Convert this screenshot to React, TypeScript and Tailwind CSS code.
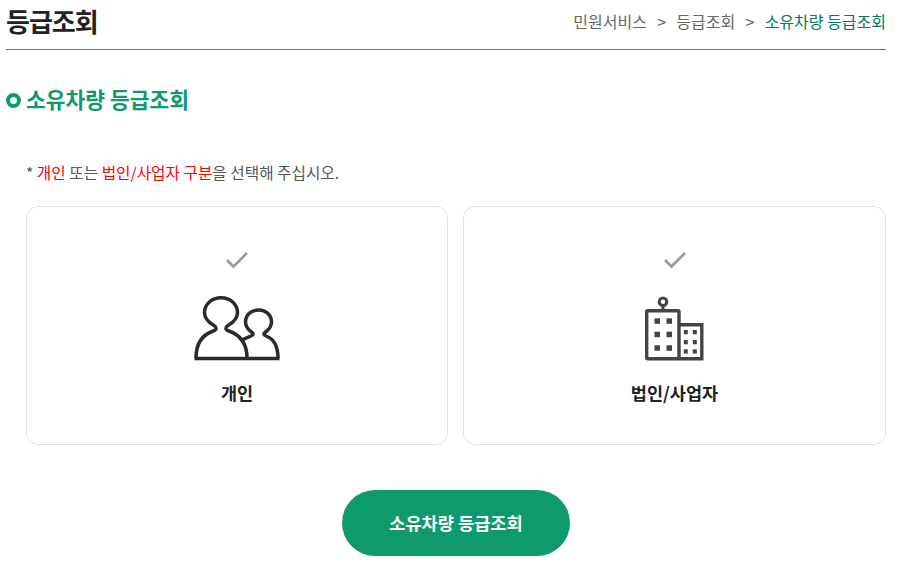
import React from "react"

const font = { fontFamily: '"Noto Sans CJK KR", "Noto Sans", sans-serif' }

function Check() {
  return (
    <svg width="24" height="18" viewBox="0 0 24 18" fill="none">
      <path d="M2 9 L8.5 15.5 L22 2" stroke="#999" strokeWidth="2.700" />
    </svg>
  )
}

function PeopleIcon() {
  return (
    <svg width="86" height="66" viewBox="0 0 86 66" fill="none" stroke="#2b2b2b" strokeWidth="3.500">
      <path d="M2 62 C2 47 8 39 19 35 C23 33.500 23 31.500 20 29.500 C14 26 10.500 22 10.500 16.500 C10.500 8 18 1.800 27 1.800 C36 1.800 43.500 8 43.500 16.500 C43.500 22 40 26 34 29.500 C31 31.500 31 33.500 35 35 C46 39 53 47 53 62" />
      <path d="M48 44.500 C50 42.500 54 41.500 57 40 C60 38.800 59.500 37.500 57.500 36 C54 33.500 51.500 30 51.500 26 C51.500 19 57 14 64.500 14 C72 14 77.500 19 77.500 26 C77.500 30 75 33.500 71.500 36 C69.500 37.500 69 38.800 72 40 C80 43 84 51 84 62" />
      <path d="M0.500 62.500 H85.500" strokeWidth="3.500" />
    </svg>
  )
}

function BuildingIcon() {
  const bigX = [9.500, 21.500]
  const bigY = [22.300, 35.700, 49.300]
  const smallX = [38.800, 47.800]
  const smallY = [34, 44, 53.300]
  return (
    <svg width="60" height="66" viewBox="0 0 60 66" fill="none">
      <circle cx="18" cy="5.700" r="3.800" stroke="#444" strokeWidth="3" />
      <path d="M18 9.500 V14" stroke="#444" strokeWidth="3" />
      <rect x="1.700" y="14.700" width="32.300" height="48" rx="1" stroke="#444" strokeWidth="3.400" />
      <path d="M34 28.700 H56.800 V62.700 H34" stroke="#444" strokeWidth="3.400" />
      {bigX.flatMap((x) =>
        bigY.map((y) => <rect key={`b${x}${y}`} x={x} y={y} width="5.500" height="5.500" fill="#444" />)
      )}
      {smallX.flatMap((x) =>
        smallY.map((y) => <rect key={`s${x}${y}`} x={x} y={y} width="4" height="4.300" fill="#444" />)
      )}
    </svg>
  )
}

function Card({ label, icon }: { label: string; icon: React.ReactNode }) {
  return (
    <div className="flex h-[239px] flex-col items-center rounded-xl border border-[#e2e2e2] bg-white pt-[44px]">
      <Check />
      <div className="mt-[27px] flex h-[66px] items-end">{icon}</div>
      <p className="mt-[18px] text-[17.500px] leading-[26px] font-bold text-[#222]">{label}</p>
    </div>
  )
}

export default function App() {
  return (
    <div className="h-[580px] w-[922px] overflow-hidden bg-white pr-[36px] pl-[6px]" style={font}>
      <header className="flex h-[50px] items-start justify-between border-b border-[#707070] pt-[1px]">
        <h1 className="text-[26px] leading-[40px] font-bold tracking-[-1px] text-[#222]">등급조회</h1>
        <nav className="flex items-center gap-[10.250px] pt-[9px] text-[16px] leading-[22px] text-[#666]">
          <span>민원서비스</span>
          <span>&gt;</span>
          <span>등급조회</span>
          <span>&gt;</span>
          <span className="text-[#00795f]">소유차량 등급조회</span>
        </nav>
      </header>

      <h2 className="mt-[34px] flex items-center gap-[5px] text-[21.500px] leading-[32px] font-bold text-[#0e9a6c]">
        <span className="h-[15px] w-[15px] rounded-full border-[4px] border-[#0e9a6c]" />
        <span className="-translate-y-px">소유차량 등급조회</span>
      </h2>

      <p className="mt-[45px] pl-[20px] text-[15.700px] leading-[24px] text-[#555]">
        * <span className="text-[#f00]">개인</span> 또는 <span className="text-[#f00]">법인/사업자 구분</span>을 선택해 주십시오.
      </p>

      <div className="mt-[21px] ml-[20px] grid grid-cols-[422px_423px] gap-[15px]">
        <Card label="개인" icon={<PeopleIcon />} />
        <Card label="법인/사업자" icon={<BuildingIcon />} />
      </div>

      <div className="mt-[45px] flex justify-center pl-[20px]">
        <button className="h-[66px] w-[228px] rounded-[33px] bg-[#0e9a6c] text-[17.600px] font-bold text-white">
          소유차량 등급조회
        </button>
      </div>
    </div>
  )
}
